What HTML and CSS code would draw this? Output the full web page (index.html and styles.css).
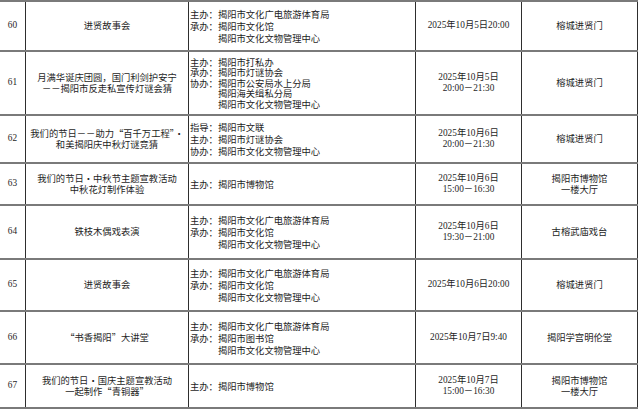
FILE: index.html
```html
<!DOCTYPE html>
<html lang="zh-CN">
<head>
<meta charset="utf-8">
<title>活动安排表</title>
<link rel="stylesheet" href="styles.css">
</head>
<body>
<div class="table">
  <div class="row h50">
    <div class="c no">60</div>
    <div class="c name">进贤故事会</div>
    <div class="c org"><div>主办：揭阳市文化广电旅游体育局</div><div>承办：揭阳市文化馆</div><div class="cont">揭阳市文化文物管理中心</div></div>
    <div class="c date">2025年10月5日20:00</div>
    <div class="c place">榕城进贤门</div>
  </div>
  <div class="row h64">
    <div class="c no">61</div>
    <div class="c name">月满华诞庆团圆，国门利剑护安宁<br>－－揭阳市反走私宣传灯谜会猜</div>
    <div class="c org tight"><div>主办：揭阳市打私办</div><div>承办：揭阳市灯谜协会</div><div>协办：揭阳市公安局水上分局</div><div class="cont">揭阳海关缉私分局</div><div class="cont">揭阳市文化文物管理中心</div></div>
    <div class="c date">2025年10月5日<br>20:00－21:30</div>
    <div class="c place">榕城进贤门</div>
  </div>
  <div class="row h48">
    <div class="c no">62</div>
    <div class="c name">我们的节日－－助力“百千万工程”・<br>和美揭阳庆中秋灯谜竞猜</div>
    <div class="c org"><div>指导：揭阳市文联</div><div>主办：揭阳市灯谜协会</div><div>协办：揭阳市文化文物管理中心</div></div>
    <div class="c date">2025年10月6日<br>20:00－21:30</div>
    <div class="c place">榕城进贤门</div>
  </div>
  <div class="row h42">
    <div class="c no">63</div>
    <div class="c name">我们的节日・中秋节主题宣教活动<br>中秋花灯制作体验</div>
    <div class="c org"><div>主办：揭阳市博物馆</div></div>
    <div class="c date">2025年10月6日<br>15:00－16:30</div>
    <div class="c place">揭阳市博物馆<br>一楼大厅</div>
  </div>
  <div class="row h54">
    <div class="c no">64</div>
    <div class="c name">铁枝木偶戏表演</div>
    <div class="c org"><div>主办：揭阳市文化广电旅游体育局</div><div>承办：揭阳市文化馆</div><div class="cont">揭阳市文化文物管理中心</div></div>
    <div class="c date">2025年10月6日<br>19:30－21:00</div>
    <div class="c place">古榕武庙戏台</div>
  </div>
  <div class="row h52">
    <div class="c no">65</div>
    <div class="c name">进贤故事会</div>
    <div class="c org"><div>主办：揭阳市文化广电旅游体育局</div><div>承办：揭阳市文化馆</div><div class="cont">揭阳市文化文物管理中心</div></div>
    <div class="c date">2025年10月6日20:00</div>
    <div class="c place">榕城进贤门</div>
  </div>
  <div class="row h53">
    <div class="c no">66</div>
    <div class="c name">“书香揭阳”大讲堂</div>
    <div class="c org"><div>主办：揭阳市文化广电旅游体育局</div><div>承办：揭阳市图书馆</div><div class="cont">揭阳市文化文物管理中心</div></div>
    <div class="c date">2025年10月7日9:40</div>
    <div class="c place">揭阳学宫明伦堂</div>
  </div>
  <div class="row h44">
    <div class="c no">67</div>
    <div class="c name">我们的节日・国庆主题宣教活动<br>一起制作“青铜器”</div>
    <div class="c org"><div>主办：揭阳市博物馆</div></div>
    <div class="c date">2025年10月7日<br>15:00－16:30</div>
    <div class="c place">揭阳市博物馆<br>一楼大厅</div>
  </div>
</div>
</body>
</html>
```

FILE: styles.css
```css
html, body {
  margin: 0;
  padding: 0;
  background: #ffffff;
}
body {
  width: 640px;
  height: 409px;
  overflow: hidden;
  color: #1e1e1e;
  font-family: "Noto Sans CJK SC", sans-serif;
  font-size: 9.3px;
  line-height: 11.5px;
}
.table {
  width: 638px;
  border-top: 2px solid #7a7a7a;
}
.row {
  display: grid;
  grid-template-columns: 26px 163px 227px 106px 116px;
  box-sizing: border-box;
  border-bottom: 2px solid #7a7a7a;
}
.h50 { height: 50px; }
.h64 { height: 64px; }
.h48 { height: 48px; }
.h42 { height: 42px; }
.h54 { height: 54px; }
.h52 { height: 52px; }
.h53 { height: 53px; }
.h44 { height: 44px; }
.c {
  box-sizing: border-box;
  border-right: 1px solid #2e2e2e;
  display: flex;
  flex-direction: column;
  justify-content: center;
  align-items: center;
  text-align: center;
  white-space: nowrap;
}
.no, .date {
  font-family: "Liberation Serif", "Noto Sans CJK SC", serif;
}
.name, .org, .place {
  font-feature-settings: "fwid";
}
.org {
  align-items: flex-start;
  text-align: left;
  padding-left: 1px;
  line-height: 12px;
}
.org.tight {
  line-height: 10.6px;
}
.cont {
  padding-left: 3em;
}
```
